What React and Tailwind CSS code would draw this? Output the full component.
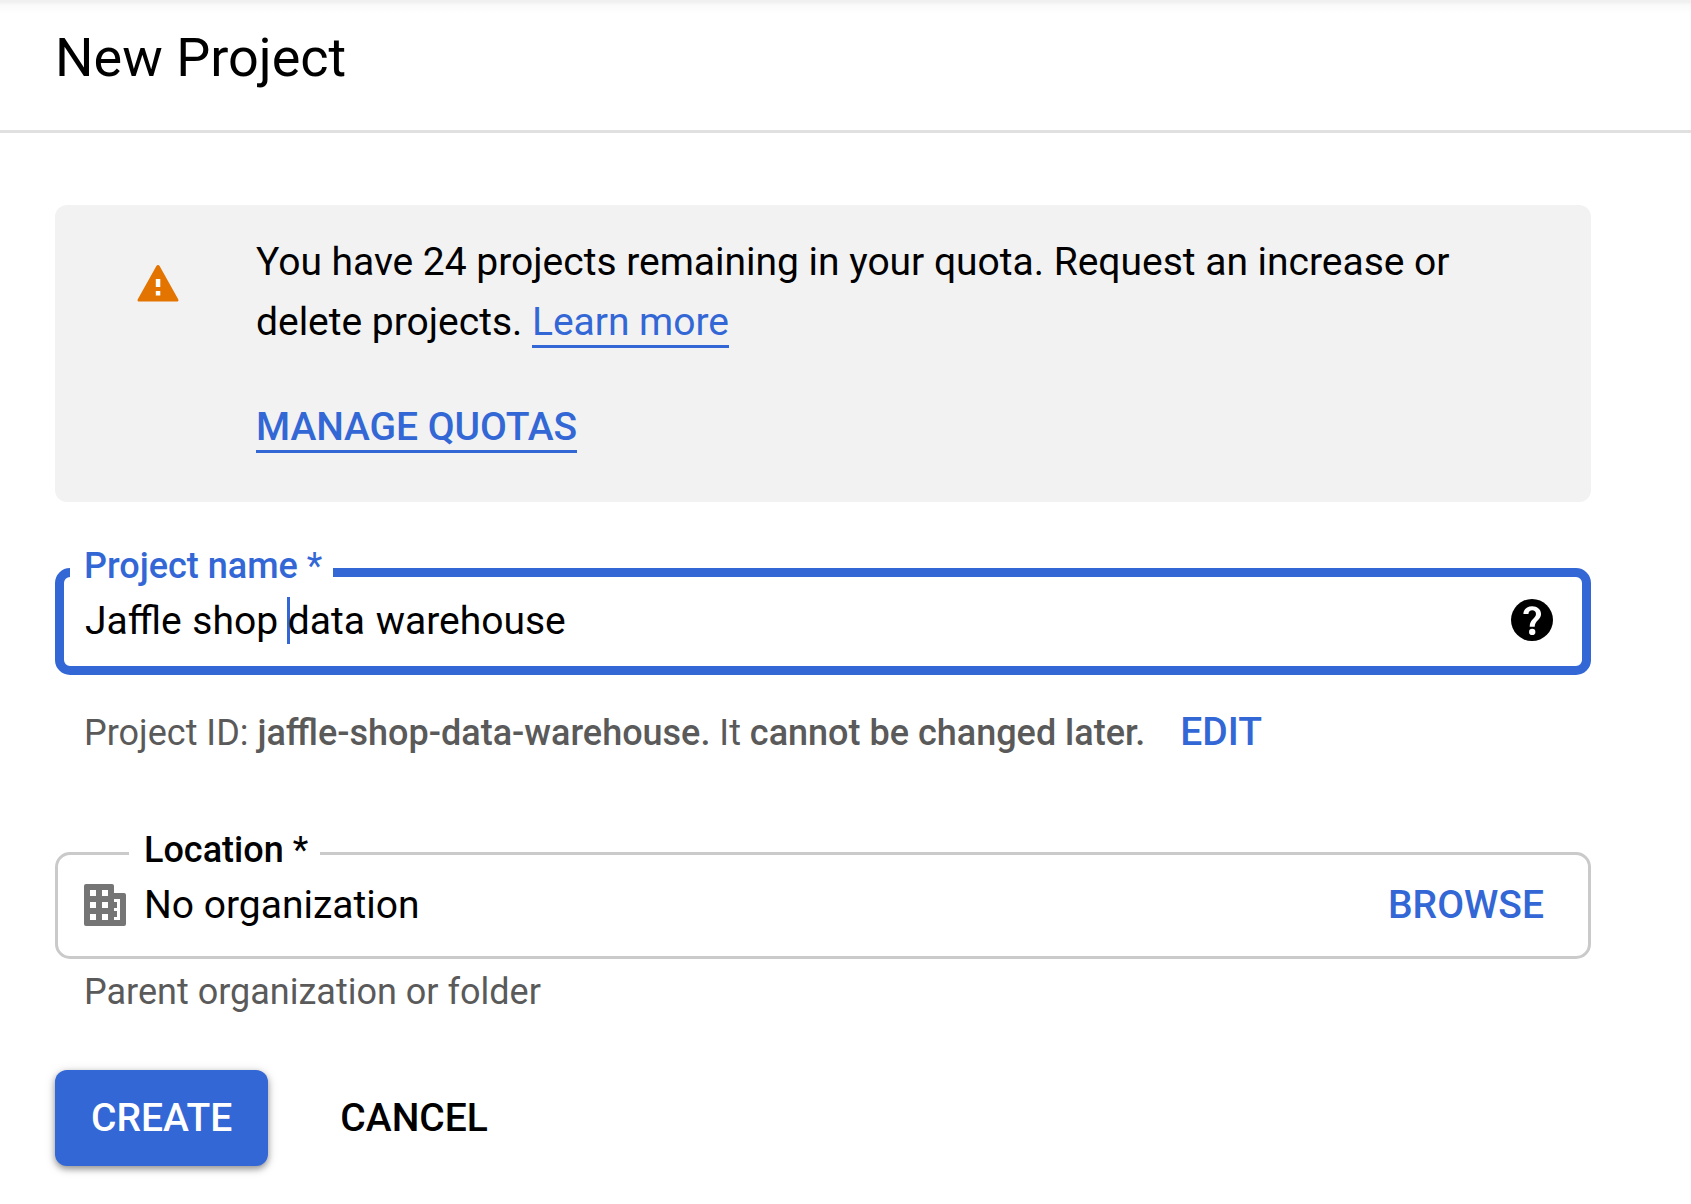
function WarningIcon() {
  return (
    <svg className="block h-[38px] w-[42px]" viewBox="0 0 42 38" fill="none">
      <path
        d="M19.4 1.9C20.1 .6 21.9 .6 22.6 1.9L41.2 35.2C41.9 36.5 41.2 37.6 39.8 37.6H2.2C.8 37.6 .1 36.5 .8 35.2Z"
        fill="#e37400"
      />
      <path d="M18.800 15h4.500v8h-4.500zM18.800 27h4.500v4.500h-4.500z" fill="#fff" />
    </svg>
  );
}

function HelpIcon() {
  return (
    <svg className="mb-[2px] block size-[42px]" viewBox="2 2 20 20">
      <circle cx="12" cy="12" r="10" fill="#000" />
      <path
        d="M7.900 9.200C7.900 6.900 9.700 5.400 12.100 5.400s4.200 1.500 4.200 3.700c0 2.600-3 3.300-3 6.100h-2.400c0-3.500 3-3.900 3-6 0-1.200-.8-1.800-1.800-1.800s-1.800.7-1.800 1.800z"
        fill="#fff"
      />
      <circle cx="12.100" cy="17.700" r="1.500" fill="#fff" />
    </svg>
  );
}

function BuildingIcon() {
  return (
    <svg className="block size-[42px]" viewBox="0 0 42 42">
      <path
        fillRule="evenodd"
        fill="#757575"
        d="M2 0H28Q30 0 30 2V9H40Q42 9 42 11V40Q42 42 40 42H2Q0 42 0 40V2Q0 0 2 0ZM6 6v6h6V6ZM18 6v6h6V6ZM6 18v6h6v-6ZM18 18v6h6v-6ZM6 30v6h6v-6ZM18 30v6h6v-6ZM30 15v3h3v6h-3v3h3v6h-3v3h6V15Z"
      />
    </svg>
  );
}

export default function App() {
  return (
    <div className="flex h-[1204px] w-[1691px] flex-col overflow-hidden bg-white font-[Roboto,sans-serif] text-[39px] text-black">
      <header className="h-[133px] shrink-0 border-b-3 border-[#e0e0e0] bg-linear-to-b from-[#f0f0f0] from-[2px] via-[#fafafa] via-[5px] to-white to-[14px] pl-[55px]">
        <h1 className="mt-[29px] text-[54px] leading-[57px] font-normal">New Project</h1>
      </header>

      <main className="flex w-[1591px] flex-col pt-[72px] pl-[55px]">
        <section className="flex h-[297px] rounded-xl bg-[#f2f2f2]">
          <div className="w-[201px] shrink-0 pt-[59px] pl-[81.500px]">
            <WarningIcon />
          </div>
          <div className="pt-[27px]">
            <p className="leading-[60px] tracking-[-0.015px] whitespace-nowrap">
              You have 24 projects remaining in your quota. Request an increase or
              <br />
              delete projects.{' '}
              <a className="border-b-3 border-[#3367d6] tracking-[-0.04px] text-[#3367d6]">Learn more</a>
            </p>
            <p className="mt-[45px] leading-[60px]">
              <a className="border-b-3 border-[#3367d6] font-medium tracking-[-0.07px] text-[#3367d6]">
                MANAGE QUOTAS
              </a>
            </p>
          </div>
        </section>

        <fieldset className="mt-[46px] h-[127px] rounded-[15px] border-9 border-[#3367d6] pl-[6px]">
          <legend className="h-[49px] w-[263px] pl-[14px] text-4xl leading-[36px] font-medium whitespace-nowrap text-[#3367d6]">
            Project name<span className="font-normal"> *</span>
          </legend>
          <div className="flex h-[47px] items-center justify-between pr-[29px] pl-[15px]">
            <div className="flex h-[47px] leading-[49px] [word-spacing:1px] whitespace-pre">
              <span>Jaffle shop </span>
              <span className="-mr-[2px] -ml-[2px] h-[47px] w-[3px] bg-[#3367d6]" />
              <span>data warehouse</span>
            </div>
            <HelpIcon />
          </div>
        </fieldset>

        <div className="mt-[33px] flex h-[48px] items-center pl-[29px] whitespace-nowrap">
          <p className="pt-[2px] text-4xl leading-[48px] text-[#5a5a5a]">
            Project ID: <b className="font-medium">jaffle-shop-data-warehouse.</b> It{' '}
            <b className="font-medium">cannot be changed later.</b>
          </p>
          <button className="ml-[35px] leading-[48px] font-medium text-[#3367d6]">EDIT</button>
        </div>

        <fieldset className="mt-[73px] h-[130px] rounded-[15px] border-3 border-[#cacaca] pl-[71px]">
          <legend className="h-[49px] w-[191px] pl-[15px] text-4xl leading-[42px] font-medium whitespace-nowrap">
            Location<span className="font-normal"> *</span>
          </legend>
          <div className="-ml-[71px] flex h-[54px] items-center pr-[44px] pl-[26px]">
            <BuildingIcon />
            <span className="ml-[18px] grow leading-[54px]">No organization</span>
            <button className="leading-[54px] font-medium text-[#3367d6]">BROWSE</button>
          </div>
        </fieldset>

        <p className="mt-[9px] pl-[29px] text-4xl leading-[48px] text-[#5a5a5a]">
          Parent organization or folder
        </p>

        <div className="mt-[54px] flex h-[96px] items-center">
          <button className="h-[96px] rounded-xl bg-[#3367d6] px-[36px] font-medium text-white shadow-[0_3px_6px_rgba(0,0,0,0.35),0_2px_12px_rgba(0,0,0,0.15)]">
            CREATE
          </button>
          <button className="ml-[72px] font-medium">CANCEL</button>
        </div>
      </main>
    </div>
  );
}
